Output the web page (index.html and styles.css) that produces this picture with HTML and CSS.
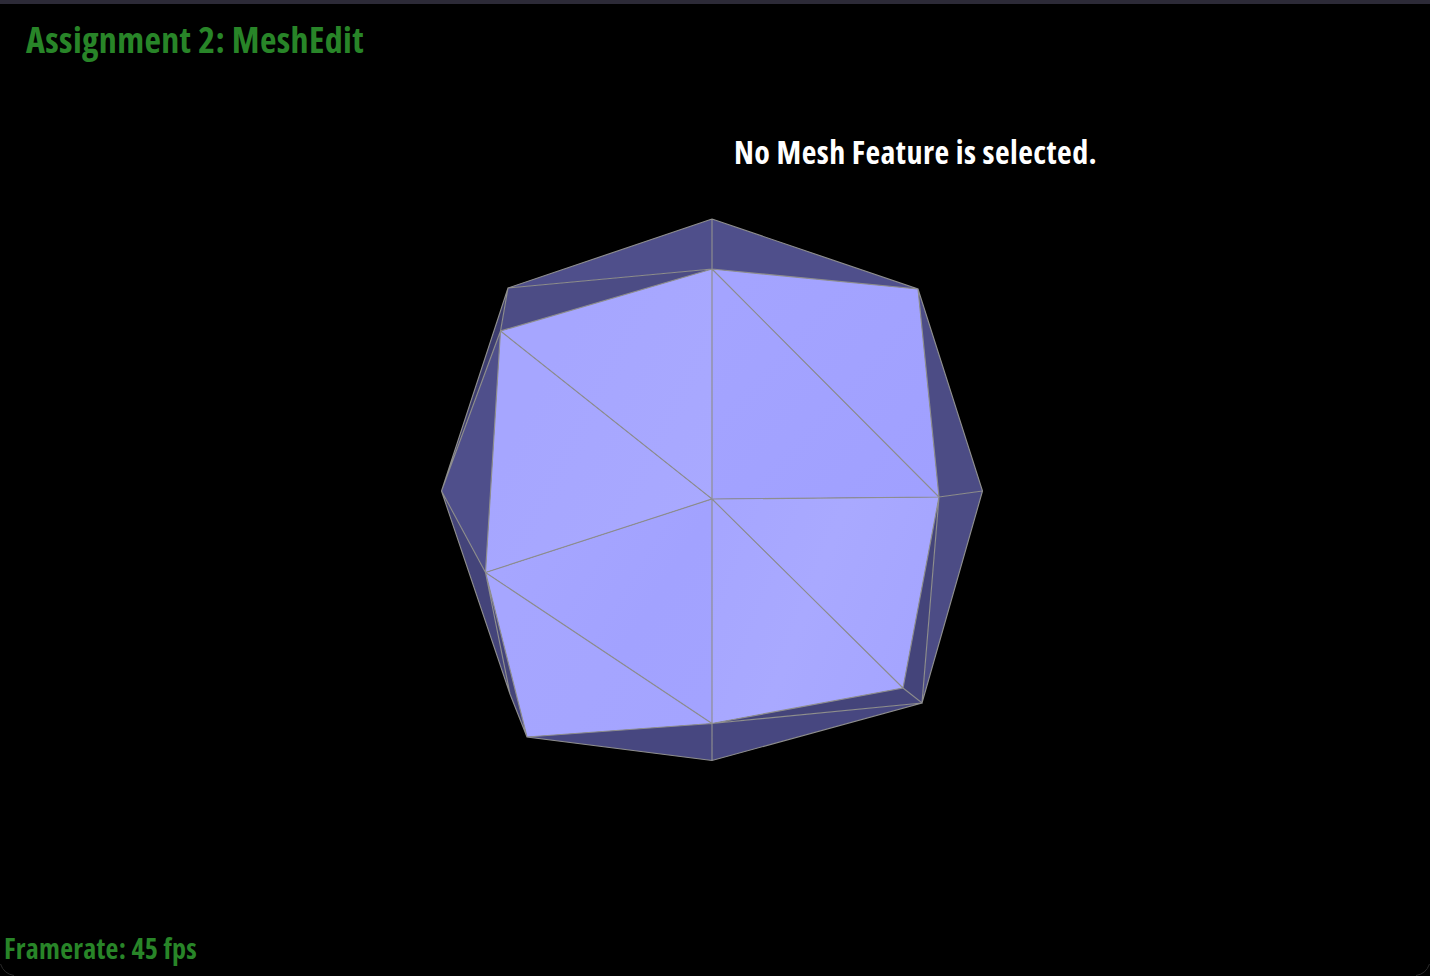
FILE: index.html
```html
<!DOCTYPE html>
<html lang="en">
<head>
<meta charset="utf-8">
<title>Assignment 2: MeshEdit</title>
<link rel="stylesheet" href="styles.css">
</head>
<body>
<div class="topbar"></div>
<main class="stage">
  <svg class="canvas" width="1430" height="972" viewBox="0 4 1430 972" aria-hidden="true">
    <defs>
      <linearGradient id="lightA" gradientUnits="userSpaceOnUse" x1="520" y1="420" x2="720" y2="520">
        <stop offset="0" stop-color="#a6a6ff"/><stop offset="1" stop-color="#a9a9ff"/>
      </linearGradient>
      <linearGradient id="lightB" gradientUnits="userSpaceOnUse" x1="720" y1="300" x2="930" y2="490">
        <stop offset="0" stop-color="#a4a4ff"/><stop offset="1" stop-color="#a0a0ff"/>
      </linearGradient>
      <linearGradient id="lightC" gradientUnits="userSpaceOnUse" x1="720" y1="520" x2="930" y2="600">
        <stop offset="0" stop-color="#a6a6ff"/><stop offset="0.5" stop-color="#a9a9ff"/><stop offset="1" stop-color="#a5a5ff"/>
      </linearGradient>
      <linearGradient id="lightD" gradientUnits="userSpaceOnUse" x1="500" y1="570" x2="710" y2="700">
        <stop offset="0" stop-color="#a6a6ff"/><stop offset="0.6" stop-color="#a2a2ff"/><stop offset="1" stop-color="#a3a3ff"/>
      </linearGradient>
      <linearGradient id="lightE" gradientUnits="userSpaceOnUse" x1="500" y1="620" x2="700" y2="720">
        <stop offset="0" stop-color="#a6a6ff"/><stop offset="1" stop-color="#a4a4ff"/>
      </linearGradient>
    </defs>
    <g class="back">
      <polygon class="d1" points="712,219 918,289 712,269"/>
      <polygon class="d1" points="712,219 508,288 712,269"/>
      <polygon class="d2" points="508,288 712,269 500.5,331"/>
      <polygon class="d3" points="508,288 500.5,331 441.5,491"/>
      <polygon class="d1" points="441.5,491 500.5,331 485.5,572.5"/>
      <polygon class="d4" points="441.5,491 485.5,572.5 527,737 510,694"/>
      <polygon class="d5" points="712,723.5 527,737 712,760.5"/>
      <polygon class="d5" points="712,723.5 712,760.5 922,703"/>
      <polygon class="d4" points="712,723.5 903,688 922,703"/>
      <polygon class="d4" points="903,688 939,497 922,703"/>
      <polygon class="d2" points="939,497 982.5,491 922,703"/>
      <polygon class="d2" points="918,289 982.5,491 939,497"/>
    </g>
    <g class="front">
      <polygon fill="url(#lightA)" points="500.5,331 712,269 712,499"/>
      <polygon fill="url(#lightA)" points="500.5,331 712,499 485.5,572.5"/>
      <polygon fill="url(#lightB)" points="712,269 918,289 939,497"/>
      <polygon fill="url(#lightB)" points="712,269 939,497 712,499"/>
      <polygon fill="url(#lightC)" points="712,499 939,497 903,688"/>
      <polygon fill="url(#lightC)" points="712,499 903,688 712,723.5"/>
      <polygon fill="url(#lightD)" points="712,499 712,723.5 485.5,572.5"/>
      <polygon fill="url(#lightE)" points="485.5,572.5 712,723.5 527,737"/>
    </g>
    <path class="edges" d="M712 219L918 289L982.5 491L922 703L712 760.5L527 737L510 694L441.5 491L508 288L712 219
      M712 219V760.5
      M508 288L712 269L918 289L939 497L903 688L712 723.5L527 737L485.5 572.5L500.5 331L712 269
      M508 288L500.5 331L441.5 491L485.5 572.5
      M500.5 331L712 499L939 497L712 269
      M485.5 572.5L712 499L903 688
      M485.5 572.5L712 723.5
      M939 497L982.5 491
      M939 497L922 703L903 688
      M922 703L712 723.5
      M485.5 572.5L510 694"/>
    <path class="corner" d="M1416 975.5Q1426 974 1429.5 964M14 975.5Q4 974 .5 964"/>
  </svg>
  <h1 class="title">Assignment 2: MeshEdit</h1>
  <p class="message">No Mesh Feature is selected.</p>
  <p class="framerate">Framerate: 45 fps</p>
</main>
</body>
</html>
```
FILE: styles.css
```css
html, body {
  margin: 0;
  height: 100%;
  background: #000;
  overflow: hidden;
}
body {
  display: flex;
  flex-direction: column;
  font-family: "Open Sans", "Noto Sans", sans-serif;
  font-stretch: condensed;
  font-weight: 700;
}
.topbar {
  height: 4px;
  flex: none;
  background: #2c2a37;
}
.stage {
  position: relative;
  flex: 1;
  display: flex;
  flex-direction: column;
  justify-content: space-between;
  background: #000;
}
.canvas {
  position: absolute;
  left: 0;
  top: 0;
}
.title, .message, .framerate {
  position: relative;
  margin: 0;
  font-weight: 700;
  white-space: nowrap;
}
.title {
  padding: 12px 0 0 26px;
  font-size: 36px;
  line-height: 48px;
  letter-spacing: 0.34px;
  color: #288528;
}
.message {
  position: absolute;
  left: 734px;
  top: 124px;
  font-size: 32px;
  line-height: 48px;
  letter-spacing: 0.44px;
  color: #fff;
}
.framerate {
  padding: 0 0 10px 4px;
  font-size: 28px;
  line-height: 36px;
  letter-spacing: 0.25px;
  color: #288528;
}
.d1 { fill: #4f4f8b; }
.d2 { fill: #4c4c85; }
.d3 { fill: #3d3d70; }
.d4 { fill: #44447a; }
.d5 { fill: #474780; }
.edges {
  fill: none;
  stroke: #8e8e8e;
  stroke-width: 1.15;
}
.corner {
  fill: none;
  stroke: #2a2a2a;
  stroke-width: 1;
}
```
